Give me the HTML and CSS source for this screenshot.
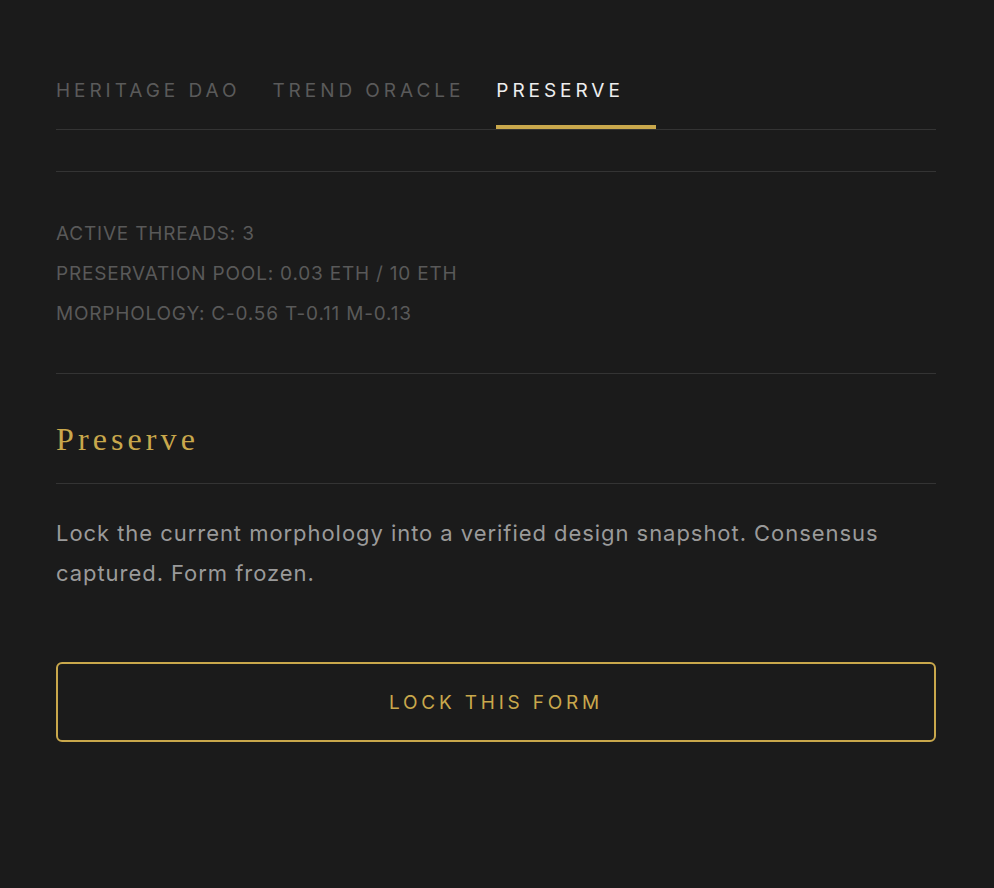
FILE: index.html
```html
<!DOCTYPE html>
<html>
<head>
<meta charset="utf-8">
<link rel="stylesheet" href="styles.css">
</head>
<body>
<main class="panel">
  <nav class="tabs">
    <span class="tab">HERITAGE DAO</span>
    <span class="tab">TREND ORACLE</span>
    <span class="tab active">PRESERVE</span>
  </nav>
  <div class="spacer"></div>
  <section class="stats">
    <div class="stat">ACTIVE THREADS: 3</div>
    <div class="stat">PRESERVATION POOL: 0.03 ETH / 10 ETH</div>
    <div class="stat">MORPHOLOGY: C-0.56 T-0.11 M-0.13</div>
  </section>
  <h2 class="title">Preserve</h2>
  <p class="desc">Lock the current morphology into a verified design snapshot. Consensus captured. Form frozen.</p>
  <button class="lock">LOCK THIS FORM</button>
</main>
</body>
</html>
```
FILE: styles.css
```css
html, body {
  margin: 0;
  padding: 0;
  background: #1b1b1b;
}
body {
  font-family: Inter, "Noto Sans", sans-serif;
}
.panel {
  width: 880px;
  padding: 60px 56px 0;
  display: flex;
  flex-direction: column;
}
.tabs {
  display: flex;
  border-bottom: 1px solid #343434;
}
.tab {
  font-size: 19px;
  letter-spacing: 3.95px;
  color: #5a5a5a;
  padding: 21px 32px 24px 0;
  line-height: 20px;
  border-bottom: 4px solid transparent;
}
.tab.active {
  color: #eeeeee;
  border-bottom-color: #c9a84c;
}
.spacer {
  height: 41px;
  border-bottom: 1px solid #343434;
}
.stats {
  padding: 42px 0 39px;
  border-bottom: 1px solid #343434;
  display: flex;
  flex-direction: column;
}
.stat {
  font-size: 19px;
  letter-spacing: 0.8px;
  line-height: 40px;
  color: #595959;
}
.title {
  margin: 0;
  font-family: "Liberation Serif", "DejaVu Serif", serif;
  font-weight: normal;
  font-size: 32px;
  letter-spacing: 4.1px;
  color: #c9a84c;
  line-height: 40px;
  padding: 45px 0 24px;
  border-bottom: 1px solid #343434;
}
.desc {
  margin: 0;
  padding: 29px 0 0;
  font-size: 22px;
  letter-spacing: 0.95px;
  line-height: 40px;
  color: #9a9a9a;
}
.lock {
  margin-top: 69px;
  height: 80px;
  border: 2px solid #c9a84c;
  border-radius: 6px;
  background: transparent;
  color: #c9a84c;
  font-family: Inter, sans-serif;
  font-size: 19px;
  letter-spacing: 3.8px;
  cursor: pointer;
}
```
